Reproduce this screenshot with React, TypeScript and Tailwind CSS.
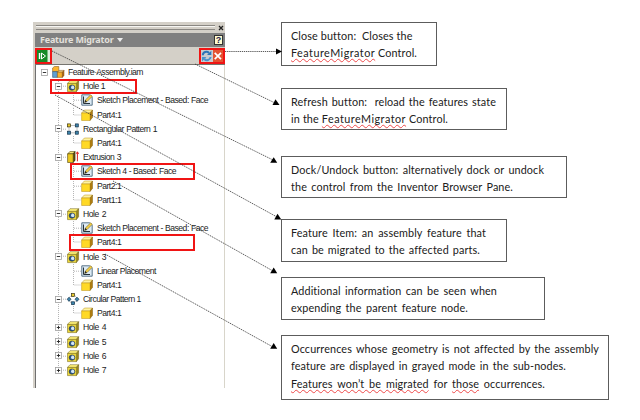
import React from "react";

type IconKind = "assembly" | "hole" | "sketch" | "part" | "rect" | "circ" | "extrude";

interface Node {
  label: string;
  icon: IconKind;
  level: 0 | 1 | 2;
  expand?: "plus" | "minus";
  last?: boolean;
  width: string;
}

const nodes: Node[] = [
  { label: "Feature Assembly.iam", icon: "assembly", level: 0, expand: "minus", width: "w-[75px]" },
  { label: "Hole 1", icon: "hole", level: 1, expand: "minus", width: "w-[22px]" },
  { label: "Sketch Placement - Based: Face", icon: "sketch", level: 2, width: "w-[111px]" },
  { label: "Part4:1", icon: "part", level: 2, last: true, width: "w-[24px]" },
  { label: "Rectangular Pattern 1", icon: "rect", level: 1, expand: "minus", width: "w-[74px]" },
  { label: "Part4:1", icon: "part", level: 2, last: true, width: "w-[24px]" },
  { label: "Extrusion 3", icon: "extrude", level: 1, expand: "minus", width: "w-[38px]" },
  { label: "Sketch 4 - Based: Face", icon: "sketch", level: 2, width: "w-[79px]" },
  { label: "Part2:1", icon: "part", level: 2, width: "w-[24px]" },
  { label: "Part1:1", icon: "part", level: 2, last: true, width: "w-[24px]" },
  { label: "Hole 2", icon: "hole", level: 1, expand: "minus", width: "w-[23px]" },
  { label: "Sketch Placement - Based: Face", icon: "sketch", level: 2, width: "w-[111px]" },
  { label: "Part4:1", icon: "part", level: 2, last: true, width: "w-[24px]" },
  { label: "Hole 3", icon: "hole", level: 1, expand: "minus", width: "w-[23px]" },
  { label: "Linear Placement", icon: "sketch", level: 2, width: "w-[58px]" },
  { label: "Part4:1", icon: "part", level: 2, last: true, width: "w-[24px]" },
  { label: "Circular Pattern 1", icon: "circ", level: 1, expand: "minus", width: "w-[57px]" },
  { label: "Part4:1", icon: "part", level: 2, last: true, width: "w-[24px]" },
  { label: "Hole 4", icon: "hole", level: 1, expand: "plus", width: "w-[23px]" },
  { label: "Hole 5", icon: "hole", level: 1, expand: "plus", width: "w-[23px]" },
  { label: "Hole 6", icon: "hole", level: 1, expand: "plus", width: "w-[23px]" },
  { label: "Hole 7", icon: "hole", level: 1, expand: "plus", last: true, width: "w-[23px]" },
];

function Cube({ hole }: { hole?: boolean }) {
  return (
    <g stroke="#6b5d14" strokeWidth=".5" strokeLinejoin="round">
      <path d="M.5 3.4 3 .7H11.6L9.4 3.4Z" fill="#fff27a" />
      <path d="M9.4 3.4 11.6 .7V8.8L9.4 11.6Z" fill={hole ? "#9a8718" : "#c99a10"} />
      <path d="M.5 3.4H9.4V11.6H.5Z" fill={hole ? "#ecd83c" : "#ffd92e"} />
      {hole && (
        <>
          <ellipse cx="5" cy="7.6" rx="2.9" ry="2.7" fill="#2b5585" stroke="#1b2738" />
          <path d="M4.6 5.8a2 1.8 0 0 1 1.6 3.4L3.8 8.2Z" fill="#d4e7f6" stroke="none" />
        </>
      )}
    </g>
  );
}

function Icon({ kind }: { kind: IconKind }) {
  return (
    <svg viewBox="0 0 12 12" className="h-3 w-3 shrink-0 overflow-visible">
      {kind === "hole" && <Cube hole />}
      {kind === "part" && (
        <g strokeLinejoin="round" strokeWidth=".5">
          <path d="M.6 4 3.4 1H11.5L9 4Z" fill="#fff3a0" stroke="#b98f18" />
          <path d="M9 4 11.5 1V8.4L9 11.5Z" fill="#b07d10" stroke="#80600f" />
          <path d="M.6 4H9V11.5H.6Z" fill="#ffd926" stroke="#b98f18" />
        </g>
      )}
      {kind === "sketch" && (
        <g>
          <path d="M.8 .8H8.6L11.2 3.2V11.2H.8Z" fill="#dceaf4" stroke="#47657d" strokeWidth=".9" />
          <path d="M2.5 2.5V9.5H9" fill="none" stroke="#26323c" strokeWidth="1" />
          <path d="M3.6 8.5 4.4 5.9 9.7 .8 11.3 2.3 6 7.6Z" fill="#f4cf45" stroke="#5b4a16" strokeWidth=".5" />
          <path d="M3.6 8.5 4.4 5.9 6 7.6Z" fill="#222" />
        </g>
      )}
      {kind === "extrude" && (
        <g>
          <path d="M.6 2.8 3 .6H8L6.2 2.8Z" fill="#fff07c" stroke="#4a3d0a" strokeWidth=".6" />
          <path d="M6.2 2.8 8 .6V9.2L6.2 11.5Z" fill="#6b5a0d" stroke="#302804" strokeWidth=".7" />
          <path d="M.6 2.8H6.2V11.5H.6Z" fill="#edc91f" stroke="#4a3d0a" strokeWidth=".6" />
          <path d="M10.4 10.3V1.2M9.2 2.8 10.4 .8 11.6 2.8" stroke="#e0201c" strokeWidth="1" fill="none" />
        </g>
      )}
      {kind === "rect" && (
        <g>
          <path d="M2.5 2.5H10M2.5 9.8H10M2 2.5V9.8M10 2.5V9.8" stroke="#333" strokeWidth=".6" strokeDasharray="1 1" />
          <rect x=".5" y=".9" width="3" height="3" fill="#e8c92c" stroke="#3a3310" strokeWidth=".7" />
          <rect x="8.3" y=".9" width="3" height="3" fill="#3e85ad" stroke="#12324a" strokeWidth=".7" />
          <rect x=".5" y="8.2" width="3" height="3" fill="#3e85ad" stroke="#12324a" strokeWidth=".7" />
          <rect x="8.3" y="8.2" width="3" height="3" fill="#3e85ad" stroke="#12324a" strokeWidth=".7" />
        </g>
      )}
      {kind === "circ" && (
        <g strokeWidth=".7">
          <circle cx="6" cy="6.2" r="3.9" fill="none" stroke="#555" strokeDasharray="1 1" strokeWidth=".6" />
          <rect x="4.6" y=".6" width="2.8" height="2.8" fill="#e8c92c" stroke="#3a3310" />
          <path d="M2 4.2 4 6.2 2 8.4 .2 6.2ZM10 4.2 12 6.2 10 8.4 8 6.2Z" fill="#3e85ad" stroke="#12324a" />
          <rect x="4.6" y="8.8" width="2.8" height="2.8" fill="#3e85ad" stroke="#12324a" />
        </g>
      )}
      {kind === "assembly" && (
        <g strokeLinejoin="round" strokeWidth=".5">
          <path d="M.6 2 2.4 .5H6.8V5.8H.6Z" fill="#fbb52c" stroke="#7c4c10" />
          <path d="M.6 5.6H5.4V11.4H.6Z" fill="#5f9fd0" stroke="#1d4468" />
          <path d="M5.4 6.2 7.2 4.4H12L10.6 6.2Z" fill="#ffe08a" stroke="#7c4c10" />
          <path d="M5.4 6.2H10.4V11.4H5.4Z" fill="#f5b02a" stroke="#7c4c10" />
          <path d="M10.4 6.2 12 4.4V9.4L10.4 11.4Z" fill="#b26c14" stroke="#7c4c10" />
        </g>
      )}
    </svg>
  );
}

function Expander({ type }: { type: "plus" | "minus" }) {
  return (
    <svg viewBox="0 0 7 7" className="h-[7px] w-[7px] shrink-0">
      <rect x=".5" y=".5" width="6" height="6" fill="#fff" stroke="#a0a0a0" strokeWidth=".8" />
      <path d={type === "plus" ? "M1.8 3.5H5.2M3.5 1.8V5.2" : "M1.8 3.5H5.2"} stroke="#222" strokeWidth=".9" />
    </svg>
  );
}

function Guides({ node }: { node: Node }) {
  const dash = { stroke: "#b4b4b4", strokeWidth: 1, strokeDasharray: "1 1" };
  const finalRow = node.level === 1 && node.last;
  return (
    <svg viewBox="0 0 60 14.2" className="absolute top-0 left-0 -z-10 h-full w-[60px]">
      {node.level > 0 && <path d={finalRow ? "M22.5 0V7" : "M22.5 0V14.2"} {...dash} />}
      {node.level === 1 && <path d="M23 7.2H31" {...dash} />}
      {node.level === 2 && <path d={node.last ? "M37.5 0V7H45" : "M37.5 0V14.2M38 7.2H45"} fill="none" {...dash} />}
    </svg>
  );
}

function Row({ node }: { node: Node }) {
  const indent = node.level === 0 ? "pl-[5px]" : node.level === 1 ? "pl-[19px]" : "pl-[45px]";
  const gap = node.level === 0 ? "gap-[4px]" : "gap-[5px]";
  return (
    <div className={`relative isolate flex h-[14.2px] items-center ${indent} ${gap}`}>
      <Guides node={node} />
      {node.expand && <Expander type={node.expand} />}
      <Icon kind={node.icon} />
      <span className={`${node.width} ${node.level === 0 ? "" : "-ml-[1px]"} text-[8.6px] leading-[14px] tracking-[-0.5px] whitespace-nowrap [text-align-last:justify]`}>
        {node.label}
      </span>
    </div>
  );
}

function Panel() {
  return (
    <section className="mt-[22px] ml-[33px] flex h-[366px] w-[192px] shrink-0 flex-col bg-[#d4d0c8] font-['Liberation_Sans',sans-serif] text-[#1c1c1c]">
      <div className="flex h-[11px] shrink-0 items-center gap-[3px] pr-[1px] pl-[3px]">
        <div className="h-[4px] flex-1 border-y border-t-[#f6f5f2] border-b-[#8a8883] shadow-[0_-1px_0_#8a8883]" />
        <svg viewBox="0 0 6 6" className="h-[6px] w-[6px]"><path d="M1 1 5 5M5 1 1 5" stroke="#222" strokeWidth="1.3" /></svg>
      </div>
      <header className="ml-[2px] flex h-[14px] shrink-0 items-center bg-[#808080] pr-[2px] pl-[5px]">
        <span className="w-[74px] font-['Noto_Sans',sans-serif] text-[9px] leading-[14px] font-bold tracking-[-0.2px] whitespace-nowrap text-[#e4e1dc]">Feature Migrator</span>
        <svg viewBox="0 0 6 4" className="ml-[3px] h-[4px] w-[6px]"><path d="M0 0H6L3 4Z" fill="#eee" /></svg>
        <span className="ml-auto flex h-[10px] w-[9px] items-center justify-center border border-[#333] bg-[#fffbd0] text-[9px] leading-none font-bold text-[#22224c]">?</span>
      </header>
      <div className="ml-[2px] flex h-[18px] shrink-0 items-center justify-between border-b border-[#77756f]">
        <div className="flex h-[16px] w-[17px] border-2 border-[#f01414] bg-[#148a26]">
          <svg viewBox="0 0 13 12" className="h-full w-full">
            <path d="M10.5 0H13V12H10.5Z" fill="#d9eedb" />
            <path d="M2.5 3V9" stroke="#fff" strokeWidth="1.4" />
            <path d="M4.5 3 8.5 6 4.5 9Z" fill="#148a26" stroke="#fff" />
          </svg>
        </div>
        <div className="flex h-[16px] w-[26px] border-2 border-[#f01414] bg-[#c9cdd0]">
          <svg viewBox="0 0 22 12" className="h-full w-full">
            <path d="M1.8 5.2C2 1.8 6 .9 8 3" fill="none" stroke="#2d75b8" strokeWidth="2" />
            <path d="M10.3 .8V5H6Z" fill="#2d75b8" />
            <path d="M9.6 7C9.2 10.2 5.2 11.2 3.4 9" fill="none" stroke="#4a91cb" strokeWidth="2" />
            <path d="M1 11.4V7H5.4Z" fill="#4a91cb" />
            <rect x="12" width="10" height="12" fill="#e45231" />
            <path d="M13.7 2.8 20 9.2M20 2.8 13.7 9.2" stroke="#fff" strokeWidth="1.7" />
          </svg>
        </div>
      </div>
      <div className="ml-[2px] flex-1 border-r border-l border-r-[#d8d5ca] border-l-[#707070] bg-white">
        {nodes.map((node, i) => <Row key={i} node={node} />)}
      </div>
    </section>
  );
}

function Misspelt({ children, wide }: { children: React.ReactNode; wide?: boolean }) {
  return (
    <span className={`underline decoration-[#ee4a4a] decoration-wavy decoration-[0.5px] underline-offset-[0.5px] [text-decoration-skip-ink:none] ${wide ? "tracking-[0.48px]" : ""}`}>
      {children}
    </span>
  );
}

function Line({ width, children }: { width: string; children: React.ReactNode }) {
  return <div className={`${width} whitespace-nowrap [text-align-last:justify]`}>{children}</div>;
}

function Callout({ box, children }: { box: string; children: React.ReactNode }) {
  return <div className={`${box} shrink-0 border border-[#5c5c5c] bg-white pl-[9px]`}>{children}</div>;
}

function Callouts() {
  return (
    <section className="mt-[22px] ml-[56px] flex flex-col font-['Lato',sans-serif] text-[10.8px] leading-[17px] tracking-[0.12px] text-[#202020]">
      <Callout box="h-[44px] w-[156px] pt-[4px]">
        <Line width="w-[121px]">Close button:&nbsp; Closes the</Line>
        <Line width="w-[126px]"><Misspelt wide>FeatureMigrator</Misspelt> Control.</Line>
      </Callout>
      <Callout box="mt-[22px] h-[42px] w-[226px] pt-[4px]">
        <Line width="w-[205px]">Refresh button:&nbsp; reload the features state</Line>
        <Line width="w-[157px]">in the <Misspelt wide>FeatureMigrator</Misspelt> Control.</Line>
      </Callout>
      <Callout box="mt-[26px] h-[42px] w-[286px] pt-[4px]">
        <Line width="w-[253px]">Dock/Undock button: alternatively dock or undock</Line>
        <Line width="w-[222px]">the control from the Inventor Browser Pane.</Line>
      </Callout>
      <Callout box="mt-[21px] h-[43px] w-[226px] pt-[4px]">
        <Line width="w-[195px]">Feature Item: an assembly feature that</Line>
        <Line width="w-[189px]">can be migrated to the affected parts.</Line>
      </Callout>
      <Callout box="mt-[15px] h-[43px] w-[264px] pt-[4px]">
        <Line width="w-[206px]">Additional information can be seen when</Line>
        <Line width="w-[177px]">expending the parent feature node.</Line>
      </Callout>
      <Callout box="mt-[15px] h-[65px] w-[328px] pt-[4px] leading-[17.4px]">
        <Line width="w-[308px]">Occurrences whose geometry is not affected by the assembly</Line>
        <Line width="w-[275px]">feature are displayed in grayed mode in the sub-nodes.</Line>
        <Line width="w-[254px]"><Misspelt>Features won’t be migrated</Misspelt> for <Misspelt>those</Misspelt> occurrences.</Line>
      </Callout>
    </section>
  );
}

function Arrows() {
  return (
    <svg viewBox="0 0 640 420" className="pointer-events-none absolute inset-0 h-[420px] w-[640px]">
      <g stroke="#333" strokeWidth=".8" strokeDasharray="1.3 .8">
        <path d="M225 51.5H278" />
        <path d="M195 64 275 103" />
        <path d="M52 51 273 160" />
        <path d="M55 95 277 217" />
        <path d="M113 181 273 271" />
        <path d="M105 254 273 347" />
      </g>
      <g fill="#000">
        <path d="M276 48.5 282 51.5 276 54.5Z" />
        <path d="M275.5 99.2 279.5 105H272.5Z" />
        <path d="M273.7 157.2 277.2 162.8H270.2Z" />
        <path d="M277.5 213.8 281.3 219.5H274.3Z" />
        <path d="M273.7 267.5 277.2 273.2H270.2Z" />
        <path d="M273.7 343 277.2 348.8H270.2Z" />
      </g>
    </svg>
  );
}

export default function App() {
  return (
    <main className="relative flex h-[420px] w-[640px] items-start overflow-hidden bg-white">
      <Panel />
      <Callouts />
      <div className="absolute top-[79px] left-[50px] h-[15px] w-[87px] border-2 border-[#f01414]" />
      <div className="absolute top-[163px] left-[70px] h-[17px] w-[125px] border-2 border-[#f01414]" />
      <div className="absolute top-[234px] left-[69px] h-[17px] w-[126px] border-2 border-[#f01414]" />
      <Arrows />
    </main>
  );
}
